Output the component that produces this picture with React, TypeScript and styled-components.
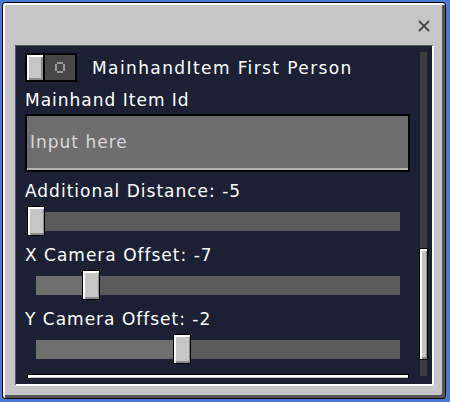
import React from "react";
import styled, { createGlobalStyle } from "styled-components";

const Global = createGlobalStyle`
  html, body { margin: 0; padding: 0; background: #4a7bd5; }
  body { width: 450px; height: 402px; overflow: hidden; font-family: "DejaVu Sans", sans-serif; }
`;

const Screen = styled.div`
  width: 450px;
  height: 402px;
  padding: 2px 0 0 2px;
  box-sizing: border-box;
`;

const Panel = styled.div`
  width: 444px;
  height: 397px;
  box-sizing: border-box;
  background: #c6c6c6;
  border: 1px solid #000;
  border-radius: 3px;
  box-shadow: inset 2px 2px 0 #fff, inset -3px -3px 0 #555;
  display: flex;
  flex-direction: column;
  padding: 0 11px 12px 12px;
`;

const Header = styled.div`
  height: 42px;
  flex-shrink: 0;
  box-sizing: border-box;
  padding-top: 4px;
  display: flex;
  justify-content: flex-end;
  align-items: center;
`;

const CloseButton = styled.button`
  width: 13px;
  height: 13px;
  margin-right: 4px;
  padding: 0;
  border: none;
  background: transparent;
  display: flex;
  align-items: center;
  justify-content: center;
  cursor: pointer;
`;

const Content = styled.div`
  flex: 1;
  min-height: 0;
  box-sizing: border-box;
  background: #1b2034;
  border-top: 1px solid #5a5a5a;
  border-left: 1px solid #5a5a5a;
  border-right: 2px solid #fff;
  border-bottom: 2px solid #fff;
  display: flex;
  padding: 6px 5px 6px 9px;
`;

const Items = styled.div`
  flex: 1;
  min-width: 0;
  overflow: hidden;
  display: flex;
  flex-direction: column;
  & > * { flex-shrink: 0; }
`;

const ScrollTrack = styled.div`
  width: 7px;
  margin-left: 10px;
  margin-bottom: 2px;
  background: #3c3c3c;
  position: relative;
`;

const ScrollThumb = styled.div`
  position: absolute;
  left: -1px;
  right: -1px;
  top: 196px;
  height: 110px;
  background: #c6c6c6;
  border: 1px solid #000;
  box-shadow: inset 2px 2px 0 #fff, inset -1px -2px 0 #8b8b8b;
`;

const ToggleRow = styled.div`
  margin-top: 1px;
  height: 29px;
  display: flex;
  align-items: center;
  gap: 15px;
`;

const Toggle = styled.div`
  width: 52px;
  height: 29px;
  box-sizing: border-box;
  border: 2px solid #000;
  background: #474747;
  display: flex;
`;

const Knob = styled.div`
  width: 16px;
  height: 100%;
  background: #c6c6c6;
  border-right: 2px solid #000;
  box-shadow: inset 2px 2px 0 #fff, inset -2px -2px 0 #8b8b8b;
`;

const ToggleGlyph = styled.div`
  flex: 1;
  display: flex;
  align-items: center;
  justify-content: center;
`;

const ToggleLabel = styled.span`
  color: #fff;
  font-size: 17px;
  letter-spacing: 1.4px;
  line-height: 20px;
  white-space: nowrap;
`;

const Label = styled.div<{ $top: number }>`
  margin-top: ${(p) => p.$top}px;
  color: #fff;
  font-size: 17px;
  letter-spacing: 1px;
  line-height: 20px;
  height: 20px;
  white-space: nowrap;
`;

const TextInput = styled.input`
  margin-top: 4px;
  height: 58px;
  width: 100%;
  box-sizing: border-box;
  border: 2px solid #000;
  background: #6e6e6e;
  box-shadow: inset 0 -2px 0 #b4b4b4;
  padding: 0 0 2px 3px;
  font-family: "DejaVu Sans", sans-serif;
  font-size: 17px;
  letter-spacing: 1px;
  color: #fff;
  outline: none;
  &::placeholder { color: #d8d8d8; }
`;

const SliderRow = styled.div`
  margin-top: 5px;
  height: 30px;
  padding: 0 10px 0 11px;
  display: flex;
  align-items: center;
`;

const Track = styled.div`
  flex: 1;
  height: 19px;
  background: #5a5a5a;
  position: relative;
`;

const Fill = styled.div`
  position: absolute;
  left: 0;
  top: 0;
  bottom: 0;
  background: #6f6f6f;
`;

const Thumb = styled.div`
  position: absolute;
  top: -6px;
  width: 18px;
  height: 30px;
  box-sizing: border-box;
  background: #c6c6c6;
  border: 1px solid #000;
  box-shadow: inset 2px 2px 0 #fff, inset -1px -2px 0 #8b8b8b;
`;

const ClippedButton = styled.div`
  margin: 10px 1px 0 2px;
  height: 30px;
  background: #c6c6c6;
  border: 1px solid #000;
  box-shadow: inset 0 2px 0 #fff, inset 2px 0 0 #fff;
`;

type SliderProps = { label: string; value: number; min: number; max: number };

function Slider({ label, value, min, max }: SliderProps) {
  const pct = ((value - min) / (max - min)) * 100;
  return (
    <>
      <Label $top={9}>{`${label}: ${value}`}</Label>
      <SliderRow>
        <Track>
          <Fill style={{ width: `${pct}%` }} />
          <Thumb style={{ left: `calc(${pct}% - 9px)` }} />
        </Track>
      </SliderRow>
    </>
  );
}

export default function App() {
  return (
    <>
      <Global />
      <Screen>
        <Panel>
          <Header>
            <CloseButton aria-label="close">
              <svg width="12" height="12" viewBox="0 0 12 12">
                <path d="M1 1 L11 11 M11 1 L1 11" stroke="#474747" strokeWidth="1.8" fill="none" />
              </svg>
            </CloseButton>
          </Header>
          <Content>
            <Items>
              <ToggleRow>
                <Toggle>
                  <Knob />
                  <ToggleGlyph>
                    <svg width="12" height="13" viewBox="0 0 12 13">
                      <path d="M3 1 H9 V3 H11 V10 H9 V12 H3 V10 H1 V3 H3 Z M3 3 V10 H9 V3 Z" fill="#9a9a9a" fillRule="evenodd" />
                    </svg>
                  </ToggleGlyph>
                </Toggle>
                <ToggleLabel>MainhandItem First Person</ToggleLabel>
              </ToggleRow>
              <Label $top={8}>Mainhand Item Id</Label>
              <TextInput placeholder="Input here" />
              <Slider label="Additional Distance" value={-5} min={-5} max={5} />
              <Slider label="X Camera Offset" value={-7} min={-10} max={10} />
              <Slider label="Y Camera Offset" value={-2} min={-10} max={10} />
              <ClippedButton />
            </Items>
            <ScrollTrack>
              <ScrollThumb />
            </ScrollTrack>
          </Content>
        </Panel>
      </Screen>
    </>
  );
}
